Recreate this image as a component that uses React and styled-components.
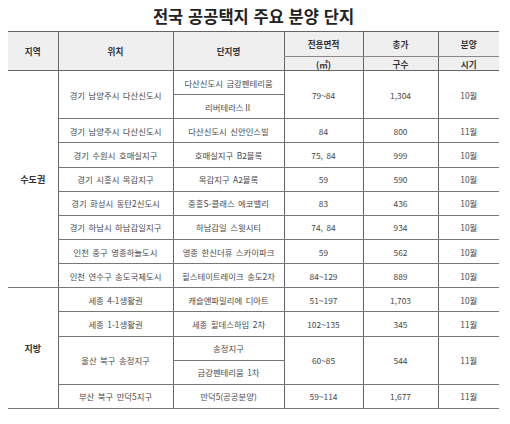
import React from "react";
import styled, { createGlobalStyle } from "styled-components";

const GlobalStyle = createGlobalStyle`
  html, body {
    margin: 0;
    padding: 0;
    background: #fff;
  }
  body {
    font-family: "Noto Sans CJK KR", "Noto Sans", sans-serif;
  }
`;

const Page = styled.div`
  width: 510px;
  height: 424px;
  padding: 0 11px 0 8px;
  box-sizing: border-box;
  overflow: hidden;
`;

const Title = styled.h1`
  margin: 0;
  height: 31px;
  line-height: 32px;
  text-align: center;
  font-size: 16.5px;
  font-weight: 700;
  color: #222;
  word-spacing: 1px;
`;

const Table = styled.table`
  width: 491px;
  border-collapse: collapse;
  table-layout: fixed;
  border-top: 1.5px solid #666;
  border-bottom: 1px solid #555;
`;

const Head = styled.th`
  background: #efefef;
  font-size: 8.6px;
  font-weight: 700;
  color: #333;
  text-align: center;
  padding: 0;
  height: ${(p) => p.h || 24}px;
  border-left: ${(p) => (p.first ? "none" : "1px solid #666")};
  border-bottom: ${(p) => (p.sub ? "1px solid #888" : "1.5px solid #666")};
`;

const Cell = styled.td`
  font-size: 8.4px;
  color: #4a4a4a;
  text-align: center;
  padding: 0;
  height: 23.15px;
  white-space: nowrap;
  word-spacing: 1.6px;
  border-left: ${(p) => (p.first ? "none" : "1px solid #666")};
  border-bottom: 1px solid #777;
`;

const Region = styled(Cell)`
  font-weight: 700;
  color: #333;
  font-size: 9px;
`;

const groups = [
  {
    name: "수도권",
    rows: [
      { loc: "경기 남양주시 다산신도시", names: ["다산신도시 금강펜테리움", "리버테라스Ⅱ"], area: "79~84", units: "1,304", month: "10월" },
      { loc: "경기 남양주시 다산신도시", names: ["다산신도시 신안인스빌"], area: "84", units: "800", month: "11월" },
      { loc: "경기 수원시 호매실지구", names: ["호매실지구 B2블록"], area: "75, 84", units: "999", month: "10월" },
      { loc: "경기 시흥시 목감지구", names: ["목감지구 A2블록"], area: "59", units: "590", month: "10월" },
      { loc: "경기 화성시 동탄2신도시", names: ["중흥S-클래스 에코밸리"], area: "83", units: "436", month: "10월" },
      { loc: "경기 하남시 하남감일지구", names: ["하남감일 스윗시티"], area: "74, 84", units: "934", month: "10월" },
      { loc: "인천 중구 영종하늘도시", names: ["영종 한신더휴 스카이파크"], area: "59", units: "562", month: "10월" },
      { loc: "인천 연수구 송도국제도시", names: ["힐스테이트레이크 송도2차"], area: "84~129", units: "889", month: "10월" },
    ],
  },
  {
    name: "지방",
    rows: [
      { loc: "세종 4-1생활권", names: ["캐슬앤파밀리에 디아트"], area: "51~197", units: "1,703", month: "10월" },
      { loc: "세종 1-1생활권", names: ["세종 힐데스하임 2차"], area: "102~135", units: "345", month: "11월" },
      { loc: "울산 북구 송정지구", names: ["송정지구", "금강펜테리움 1차"], area: "60~85", units: "544", month: "11월" },
      { loc: "부산 북구 만덕5지구", names: ["만덕5(공공분양)"], area: "59~114", units: "1,677", month: "11월" },
    ],
  },
];

function GroupRows({ group }) {
  const span = group.rows.reduce((n, r) => n + r.names.length, 0);
  const out = [];
  group.rows.forEach((r, i) => {
    const n = r.names.length;
    out.push(
      <tr key={`${i}-0`}>
        {i === 0 && (
          <Region first rowSpan={span}>
            {group.name}
          </Region>
        )}
        <Cell rowSpan={n}>{r.loc}</Cell>
        <Cell>{r.names[0]}</Cell>
        <Cell rowSpan={n}>{r.area}</Cell>
        <Cell rowSpan={n}>{r.units}</Cell>
        <Cell rowSpan={n}>{r.month}</Cell>
      </tr>
    );
    r.names.slice(1).forEach((nm, j) => {
      out.push(
        <tr key={`${i}-${j + 1}`}>
          <Cell>{nm}</Cell>
        </tr>
      );
    });
  });
  return out;
}

export default function App() {
  return (
    <Page>
      <GlobalStyle />
      <Title>전국 공공택지 주요 분양 단지</Title>
      <Table>
        <colgroup>
          <col style={{ width: 50 }} />
          <col style={{ width: 115 }} />
          <col style={{ width: 111 }} />
          <col style={{ width: 79 }} />
          <col style={{ width: 75 }} />
          <col style={{ width: 61 }} />
        </colgroup>
        <thead>
          <tr>
            <Head first rowSpan={2}>지역</Head>
            <Head rowSpan={2}>위치</Head>
            <Head rowSpan={2}>단지명</Head>
            <Head sub h={24}>전용면적</Head>
            <Head sub h={24}>총가</Head>
            <Head sub h={24}>분양</Head>
          </tr>
          <tr>
            <Head h={13}>(㎡)</Head>
            <Head h={13}>구수</Head>
            <Head h={13}>시기</Head>
          </tr>
        </thead>
        <tbody>
          {groups.map((g) => (
            <GroupRows key={g.name} group={g} />
          ))}
        </tbody>
      </Table>
    </Page>
  );
}
